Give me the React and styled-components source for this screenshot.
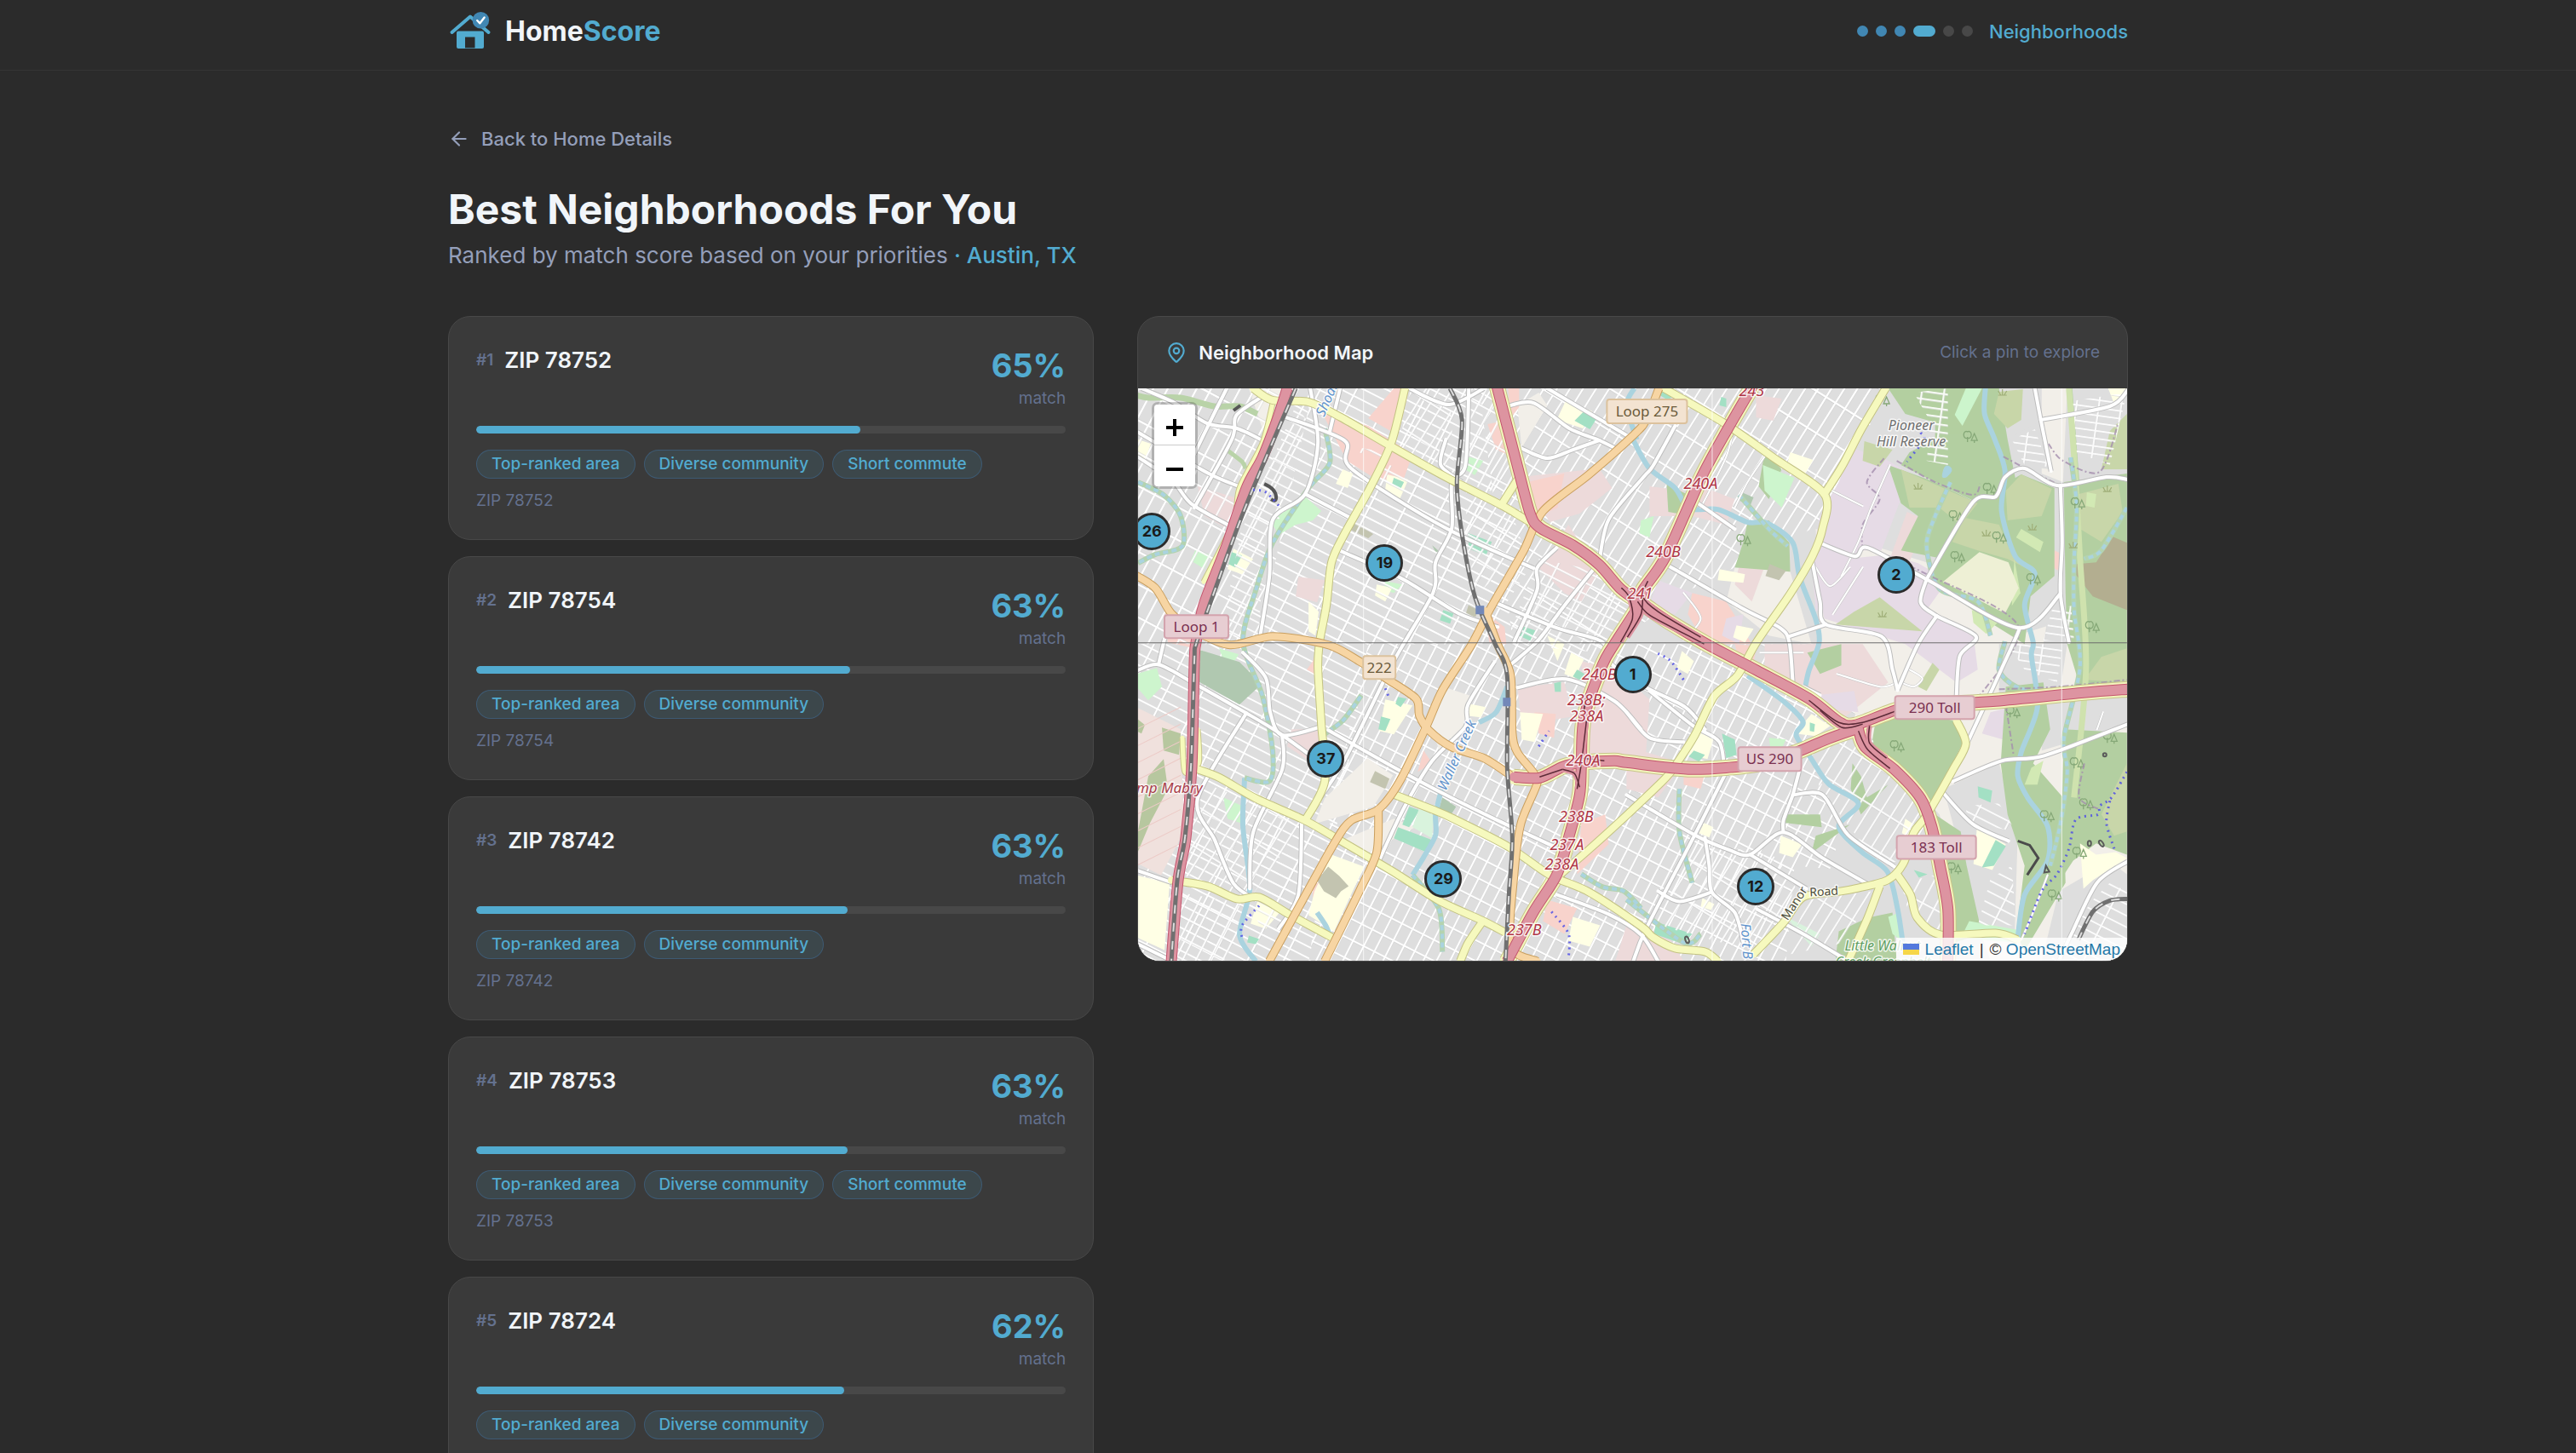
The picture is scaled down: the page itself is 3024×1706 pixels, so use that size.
import React from "react";
import styled, { createGlobalStyle, css } from "styled-components";
import { ArrowLeft, MapPin } from "lucide-react";

const color = {
  bg: "#2b2b2b",
  card: "#3a3a3a",
  line: "#484848",
  hairline: "#353535",
  primary: "#52abd0",
  primaryDeep: "#4187b3",
  text: "#f1f5f9",
  soft: "#949fba",
  muted: "#64718e",
};

const GlobalStyle = createGlobalStyle`
  *, *::before, *::after { box-sizing: border-box; }
  body {
    margin: 0;
    background: ${color.bg};
    color: ${color.text};
    font-family: Inter, "Liberation Sans", sans-serif;
    font-size: 22px;
    line-height: 32px;
    -webkit-font-smoothing: antialiased;
  }
  button { font: inherit; color: inherit; cursor: pointer; }
  a { color: inherit; text-decoration: none; }
`;

/* ---------- page frame ---------- */

const Page = styled.div`
  height: 100vh;
  overflow: hidden;
`;

const Container = styled.div`
  width: 100%;
  max-width: 2048px;
  margin: 0 auto;
  padding: 0 38px;
`;

const Header = styled.header`
  padding: 11px 0 20px;
  border-bottom: 1px solid ${color.hairline};
`;

const HeaderRow = styled(Container)`
  display: flex;
  align-items: center;
  justify-content: space-between;
`;

const Brand = styled.a`
  display: flex;
  align-items: center;
  gap: 16px;
  font-size: 32px;
  line-height: 45px;
  font-weight: 700;
`;

const BrandAccent = styled.span`
  color: ${color.primary};
`;

const Steps = styled.div`
  display: flex;
  align-items: center;
  gap: 19px;
  color: ${color.primary};
  font-weight: 500;
`;

const StepDots = styled.div`
  display: flex;
  gap: 9px;
`;

const stepColors = {
  done: color.primaryDeep,
  current: color.primary,
  todo: color.line,
};

const StepDot = styled.span`
  width: ${(p) => (p.$state === "current" ? 26 : 13)}px;
  height: 13px;
  border-radius: 7px;
  background: ${(p) => stepColors[p.$state]};
`;

const Main = styled.main`
  padding: 64px 0;
`;

const BackLink = styled.a`
  display: flex;
  width: fit-content;
  align-items: center;
  gap: 13px;
  color: ${color.soft};
  font-weight: 500;
`;

const Intro = styled.div`
  margin: 38px 0 51px;
`;

const Title = styled.h1`
  margin: 0 0 5px;
  font-size: 48px;
  line-height: 58px;
  font-weight: 700;
`;

const Subtitle = styled.p`
  margin: 0;
  font-size: 26px;
  line-height: 40px;
  color: ${color.soft};
`;

const City = styled.span`
  color: ${color.primary};
  font-weight: 500;
`;

const Columns = styled.div`
  display: grid;
  grid-template-columns: repeat(5, minmax(0, 1fr));
  gap: 51px;
  align-items: start;
`;

/* ---------- ranked list ---------- */

const RankList = styled.ol`
  grid-column: span 2;
  display: flex;
  flex-direction: column;
  gap: 19px;
  margin: 0;
  padding: 0;
  list-style: none;
`;

const surface = css`
  background: ${color.card};
  border: 1px solid ${color.line};
  border-radius: 26px;
`;

const Card = styled.li`
  ${surface}
  padding: 32px;
  font-size: 19px;
  line-height: 26px;
  color: ${color.muted};
`;

const CardTop = styled.div`
  display: flex;
  justify-content: space-between;
  align-items: flex-start;
  margin-bottom: 19px;
`;

const CardHeading = styled.div`
  display: flex;
  align-items: center;
  gap: 13px;
`;

const Rank = styled.span`
  font-weight: 600;
`;

const Name = styled.h2`
  margin: 0;
  font-size: 26px;
  line-height: 38px;
  font-weight: 600;
  color: ${color.text};
`;

const Score = styled.div`
  text-align: right;
`;

const ScoreValue = styled.div`
  font-size: 38px;
  line-height: 51px;
  font-weight: 700;
  color: ${color.primary};
`;

const Track = styled.div`
  height: 9px;
  margin-bottom: 19px;
  border-radius: 5px;
  background: ${color.line};
  overflow: hidden;
`;

const Fill = styled.div`
  height: 100%;
  border-radius: 5px;
  background: ${color.primary};
`;

const Tags = styled.ul`
  display: flex;
  flex-wrap: wrap;
  gap: 10px;
  margin: 0 0 13px;
  padding: 0;
  list-style: none;
`;

const Tag = styled.li`
  padding: 3px 17px;
  border: 1px solid rgba(62, 112, 165, 0.45);
  border-radius: 17px;
  background: rgba(82, 171, 208, 0.12);
  color: ${color.primary};
  font-weight: 500;
`;

/* ---------- map panel ---------- */

const MapCard = styled.section`
  ${surface}
  grid-column: span 3;
  overflow: hidden;
`;

const MapHeader = styled.div`
  display: flex;
  align-items: center;
  justify-content: space-between;
  padding: 26px 32px;
`;

const MapTitle = styled.h2`
  display: flex;
  align-items: center;
  gap: 13px;
  margin: 0;
  font-size: 22px;
  line-height: 32px;
  font-weight: 600;

  svg {
    color: ${color.primary};
  }
`;

const MapHint = styled.span`
  font-size: 19px;
  color: ${color.muted};
`;

const MapView = styled.div`
  position: relative;
  height: 672px;
  overflow: hidden;
  background: #dedede;
`;

const MapArt = styled.svg`
  display: block;
  width: 100%;
  height: 100%;
`;

const ZoomControl = styled.div`
  position: absolute;
  top: 16px;
  left: 16px;
  display: flex;
  flex-direction: column;
  border: 3px solid rgba(0, 0, 0, 0.2);
  border-radius: 7px;
  background-clip: padding-box;
`;

const ZoomButton = styled.button`
  display: grid;
  place-items: center;
  width: 48px;
  height: 48px;
  padding: 7px 0 0;
  border: 0;
  background: #fff;
  color: #000;

  &:first-child {
    border-bottom: 1px solid #ccc;
    border-radius: 4px 4px 0 0;
  }
  &:last-child {
    border-radius: 0 0 4px 4px;
  }
`;

const Pin = styled.button`
  position: absolute;
  display: grid;
  place-items: center;
  width: 44px;
  height: 44px;
  margin: -22px 0 0 -22px;
  padding: 0;
  border: 3px solid ${color.bg};
  border-radius: 50%;
  background: ${color.primary};
  color: #1a1a1a;
  font-size: 18px;
  line-height: 24px;
  font-weight: 700;
`;

const Attribution = styled.div`
  position: absolute;
  right: 0;
  bottom: 0;
  display: flex;
  align-items: center;
  gap: 7px;
  padding: 0 8px;
  background: rgba(255, 255, 255, 0.8);
  color: #333;
  font-family: "Liberation Sans", Arial, sans-serif;
  font-size: 19px;
  line-height: 27px;

  a {
    display: inline-flex;
    align-items: center;
    gap: 7px;
    color: #2478a8;
  }
`;

/* ---------- map drawing ---------- */

/* Smooth path through a flat list of x,y values. */
const curve = (flat) => {
  const p = [];
  for (let i = 0; i < flat.length; i += 2) p.push([flat[i], flat[i + 1]]);
  let d = `M${p[0][0]} ${p[0][1]}`;
  for (let i = 0; i < p.length - 1; i++) {
    const a = p[i - 1] || p[i];
    const b = p[i];
    const c = p[i + 1];
    const e = p[i + 2] || c;
    d += `C${b[0] + (c[0] - a[0]) / 7} ${b[1] + (c[1] - a[1]) / 7} ${c[0] - (e[0] - b[0]) / 7} ${c[1] - (e[1] - b[1]) / 7} ${c[0]} ${c[1]}`;
  }
  return d;
};

const Roads = ({ lines, width, fill, casing, edge = 2 }) => (
  <g fill="none" strokeLinejoin="round">
    {lines.map((l, i) => (
      <path key={`c${i}`} d={curve(l)} stroke={casing} strokeWidth={width + edge} />
    ))}
    {lines.map((l, i) => (
      <path key={`f${i}`} d={curve(l)} stroke={fill} strokeWidth={width} strokeLinecap="round" />
    ))}
  </g>
);

const Areas = ({ fill, shapes }) => (
  <g fill={fill}>
    {shapes.map((s, i) => (
      <polygon key={i} points={s} />
    ))}
  </g>
);

const land = [
  ["#f2efe9", [
    "795,165 880,190 960,215 1030,290 1160,250 1160,672 1000,672 940,500 850,400 800,300",
    "361,351 391,361 384,394 353,424 343,394",
    "269,434 299,454 276,491 207,511 219,481",
    "1060,0 1090,0 1085,110 1060,100",
    "700,210 765,215 790,300 740,290 690,250",
    "940,430 1010,420 1010,440 955,455",
    "130,0 185,0 170,40 150,60",
    "445,20 470,5 480,20 450,70",
    "300,505 325,515 270,545 240,530",
  ]],
  ["#dedede", [
    "1010,300 1090,300 1080,365 1010,365",
    "1090,0 1160,0 1150,50 1120,105 1092,80",
    "1020,60 1055,40 1070,95 1045,92 1022,110",
    "1060,370 1160,358 1160,395 1060,425",
    "945,470 1010,440 1032,520 1028,650 985,640 965,545",
    "800,400 860,410 925,500 935,560 890,570 830,520 790,440",
    "770,560 880,570 930,640 945,672 760,672",
    "1080,590 1140,555 1160,570 1160,672 1060,672",
    "1070,250 1095,245 1098,300 1062,300",
    "808,150 850,120 870,140 830,180",
  ]],
  ["#eddada", [
    "449,104 541,94 556,117 518,147 483,157",
    "188,221 219,225 210,251 185,244",
    "70,115 120,130 105,165 78,150",
    "661,115 700,130 690,160 650,150",
    "707,200 740,195 720,250 700,230",
    "735,300 850,300 880,345 830,385 780,355 735,335",
    "902,145 925,155 900,215 880,205",
    "520,320 560,330 600,365 595,440 525,430",
    "445,351 500,345 510,385 450,395",
    "573,420 640,440 610,480 573,470",
    "573,630 620,640 640,672 560,672",
    "600,115 640,120 630,150 600,150",
    "725,8 755,12 745,38 725,34",
    "505,160 540,215 520,250 500,240 470,210",
    "180,400 215,400 205,440 175,420",
  ]],
  ["#f8d3cc", [
    "215,27 270,44 322,77 310,111 275,104 245,85",
    "300,0 318,0 305,55 270,35",
    "434,0 447,0 447,22 437,35",
    "410,42 430,38 440,80 420,72",
    "457,110 500,100 492,140 470,150",
    "650,240 690,250 720,300 665,300 645,265",
    "700,300 725,302 722,325 705,320",
    "520,510 548,500 552,535 515,570",
    "480,600 515,610 500,640 475,625",
    "407,262 430,280 432,300 412,298",
    "30,262 70,275 66,305 35,298",
    "205,585 222,570 225,600 205,612",
    "205,320 213,296 216,340 198,330",
    "335,425 345,440 328,450",
    "1075,190 1085,195 1082,215 1073,210",
    "640,455 665,452 660,470 640,465",
    "465,380 490,382 488,410 470,405",
  ]],
  ["#e6dbe6", [
    "837,70 875,82 906,100 872,190 850,190 830,240 795,262 790,200 800,150 822,110",
    "791,204 880,195 915,205 950,225 925,260 980,290 985,330 960,345 900,300 805,270",
    "1000,380 1020,375 1025,415 990,405",
    "610,225 650,240 630,265 600,255",
    "690,270 710,265 705,300 685,290",
    "797,360 840,355 845,380 800,375",
    "920,145 960,170 950,190 922,175",
  ]],
  ["#b3cfa1", [
    "880,0 1010,0 1020,60 1030,110 980,132 935,110 895,90 905,75 935,60 935,40 900,30",
    "979,134 1036,101 1075,117 1075,220 1047,244 1040,300 1000,275 930,225 940,190",
    "880,90 935,110 985,135 945,200 895,190 915,150 895,135",
    "1086,110 1160,100 1160,350 1105,350 1090,300 1088,240",
    "715,157 740,155 764,181 765,215 700,210 710,180",
    "620,112 645,125 650,150 622,145",
    "735,75 755,95 740,130 728,115",
    "864,397 891,380 960,390 967,417 933,487 891,444 860,421",
    "1018,350 1062,345 1070,400 1050,440 1085,480 1088,580 1040,660 1030,640 1040,560 1020,500 1012,440",
    "1086,400 1160,404 1160,547 1124,534 1097,554 1082,577",
    "822,637 856,621 885,615 890,672 818,672",
    "935,500 965,520 972,560 990,640 958,650 950,560",
    "756,500 800,500 802,515 760,510",
    "838,440 848,455 855,480 880,465 848,500 836,470",
    "795,525 835,512 790,545",
    "785,310 825,300 825,325 800,335",
    "1090,0 1096,0 1105,120 1098,80",
  ]],
  ["#c8d6a9", [
    "1010,4 1038,1 1036,37 1020,47 1004,30",
    "895,95 940,115 985,135 965,160 940,140 905,140",
    "1036,101 1072,118 1060,150 1020,155 1018,120",
    "970,152 1010,160 1025,195 1050,215 1020,200 985,190 955,180",
    "1100,125 1150,112 1155,145 1130,180 1105,165",
    "840,262 870,245 920,285 818,277",
    "1130,315 1160,305 1160,345 1110,342",
    "1130,500 1160,440 1160,520 1145,525",
    "852,62 885,72 870,92 850,85",
    "925,355 940,330 932,322 915,350",
    "1140,50 1160,30 1160,95 1130,95",
  ]],
  ["#cdf5cd", [
    "971,0 990,0 967,44 958,31",
    "165,144 196,127 215,144 205,155 185,160 165,172 158,160",
    "733,90 770,105 755,140 735,120",
    "-2,335 22,328 28,350 12,366 -2,350",
    "67,190 85,195 78,212 62,202",
    "386,80 405,85 395,102 385,96",
    "290,226 310,230 300,240 288,236",
    "95,305 118,312 112,322 100,318",
    "100,480 122,490 120,510 105,505",
    "880,620 893,615 898,650 885,640",
    "975,625 1030,635 1030,650 965,645",
    "590,155 605,150 600,175 588,170",
    "740,410 760,412 752,430 742,424",
  ]],
  ["#d2e9b4", [
    "1036,165 1062,180 1058,192 1030,175",
    "1048,445 1062,437 1055,465 1040,465",
    "1113,122 1124,124 1122,140 1112,138",
    "978,260 1008,275 995,288 980,275",
    "1028,200 1035,240 1025,255",
  ]],
  ["#eef0d5", ["987,192 1021,204 1033,234 1017,264 944,227"]],
  ["#b0c8b0", [
    "73,307 119,321 145,347 119,371 71,344",
    "357,480 373,491 366,502 352,497",
    "708,122 722,128 718,138 706,132",
    "345,184 352,190 350,194",
  ]],
  ["#f0e1dd", ["-2,374 50,400 54,520 27,571 -2,557"]],
  ["#b7c79f", [
    "-2,387 8,395 4,405 -2,402",
    "28,398 50,405 48,430 30,425",
    "-2,530 12,455 30,435 35,470 14,510 -2,548",
  ]],
  ["#b3ae90", ["1143,174 1160,181 1160,260 1120,244 1099,217 1101,206 1124,204"]],
  ["#ffffe5", [
    "-2,571 37,581 31,659 -2,644",
    "227,547 265,561 230,637 200,618 207,590",
    "502,14 533,27 522,47 491,37",
    "292,101 317,107 307,130 290,118",
    "0,60 15,65 8,85 -2,80",
    "240,95 252,100 246,117 232,112",
    "112,188 135,200 122,218 105,212",
    "290,365 322,372 300,406 283,402",
    "448,380 475,382 465,415 450,412",
    "508,310 523,318 512,340 500,335",
    "388,370 408,374 402,386 385,384",
    "480,290 500,300 492,320",
    "682,212 712,218 710,228 680,225",
    "765,75 792,84 780,104 760,96",
    "638,308 652,320 645,335 632,328",
    "790,382 812,396 795,408 770,405",
    "652,400 675,412 668,435 645,430",
    "754,525 779,535 768,550 752,545",
    "900,505 915,515 910,530 896,522",
    "984,517 1018,535 1002,565 980,558",
    "1105,534 1124,547 1147,544 1160,551 1120,577 1109,587",
    "140,602 166,615 150,634 132,628",
    "510,620 542,630 530,655 505,648",
    "1138,0 1160,0 1145,18",
    "280,230 298,234 290,250 278,243",
    "702,278 722,282 712,298 698,292",
    "662,598 676,605 672,612 660,608",
    "200,250 212,262 208,290 200,285",
    "664,510 675,515 670,527 658,522",
  ]],
  ["#c3c4b0", [
    "223,561 236,572 247,584 238,590 232,598 218,590 210,577",
    "248,152 276,171 270,176 245,164",
    "388,253 400,256 396,268 384,266",
    "278,449 295,458 290,470 272,462",
    "741,206 760,214 752,225 736,220",
  ]],
  ["#a3e0c4", [
    "522,28 540,32 530,48 512,38",
    "300,105 312,110 308,118 298,112",
    "387,170 415,180 408,196 388,188",
    "110,192 122,196 114,210 106,206",
    "305,362 315,364 308,374 302,370",
    "285,385 296,388 290,402 282,400",
    "358,260 370,264 366,276 354,272",
    "448,278 466,284 460,296 446,290",
    "318,491 330,495 318,515 310,512",
    "305,515 345,530 340,545 300,528",
    "488,346 496,344 496,356 489,356",
    "985,467 1002,472 1000,486 986,480",
    "1006,530 1018,537 1004,560 990,562",
    "685,405 700,412 702,430 690,434",
    "608,626 650,640 640,652 605,640",
    "788,392 794,394 793,403 788,402",
    "515,330 524,335 518,342 510,338",
    "130,642 142,646 138,652 128,650",
    "652,425 665,430 658,438 646,432",
    "910,565 926,570 916,574",
    "613,2 628,8 622,14 612,8",
    "684,10 690,12 690,22 682,20",
  ]],
  ["#d9f3dd", ["330,492 347,501 345,528 322,515", "760,620 800,640 790,655"]],
];

/* Broad street texture under the land use: outline, pattern id */
const baseGrids = [
  ["-2,0 205,0 140,300 -2,300", "gridA"],
  ["205,0 400,0 440,300 140,300", "gridB"],
  ["400,0 880,0 800,160 640,240 560,300 440,300", "gridC"],
  ["-2,300 270,300 240,480 -2,480", "gridB"],
  ["270,300 800,300 860,400 780,672 200,672 230,480", "gridD"],
  ["-2,480 240,480 200,672 -2,672", "gridB"],
];

/* Neighbourhood street grids: outline, pattern id */
const grids = [
  ["-2,0 170,0 120,150 60,300 -2,300", "gridA"],
  ["185,20 215,60 195,120 150,170 140,300 95,300 120,170", "gridB"],
  ["235,65 440,150 460,210 400,300 225,300 235,190 290,75", "gridB"],
  ["320,0 365,0 372,110 305,70", "gridC"],
  ["385,0 420,0 445,130 380,110", "gridA"],
  ["385,120 455,155 440,200 400,240 385,190", "gridC"],
  ["470,200 545,215 585,255 545,310 430,300", "gridB"],
  ["745,40 760,0 875,0 820,110 790,75", "gridC"],
  ["70,460 195,510 130,600 50,570", "gridC"],
  ["200,515 235,535 160,672 130,600", "gridB"],
  ["40,590 130,605 120,640 100,672 35,672", "gridD"],
  ["395,395 432,390 432,450 380,430", "gridD"],
  ["443,540 485,575 460,620 440,640", "gridD"],
  ["655,530 750,550 780,600 720,660 610,630", "gridC"],
  ["785,420 860,410 920,500 930,545 870,560 800,470", "gridC"],
  ["785,600 860,590 830,650 760,665", "gridC"],
  ["895,580 940,570 950,640 905,620", "gridA"],
  ["1000,575 1025,560 1030,630 985,630", "gridB"],
  ["970,490 1010,487 1030,520 975,510", "gridB"],
  ["1095,15 1160,5 1140,90 1100,75", "gridE"],
  ["1025,60 1052,48 1068,92 1040,90", "gridE"],
  ["1072,260 1095,255 1098,296 1062,296", "gridE"],
  ["1120,600 1140,580 1160,590 1160,672 1070,672", "gridB"],
  ["910,5 950,0 950,90 925,85 930,40", "gridE"],
  ["1020,300 1085,300 1078,345 1040,330", "gridE"],
];

const creeks = [
  [581, 61, 600, 94, 630, 117, 646, 141, 680, 142, 715, 157, 738, 158, 768, 181, 776, 221, 795, 271, 799, 298, 787, 331, 782, 354],
  [994, 0, 993, 30, 1005, 60, 1017, 97, 1013, 144, 1029, 197, 1052, 217, 1040, 254, 1050, 298, 1048, 314, 1055, 374, 1036, 427, 1032, 455, 1044, 481, 1067, 514, 1067, 554, 1040, 594, 1032, 644],
  [715, 337, 757, 367, 780, 391, 772, 407, 790, 435, 810, 464, 845, 487, 822, 514, 849, 544, 879, 567, 891, 611, 898, 657],
  [433, 350, 420, 380, 400, 392],
  [356, 470, 349, 500, 349, 524, 335, 550, 322, 571],
  [125, 457, 123, 514, 131, 587, 119, 641, 138, 672],
  [210, 615, 220, 630, 225, 642],
  [582, 0, 573, 20, 585, 60],
];
const dashedCreeks = [
  [219, 47, 225, 87, 200, 117, 158, 181, 138, 237, 123, 298, 146, 361, 158, 427, 154, 461, 125, 457],
  [0, 110, 30, 125, 50, 150, 52, 185, 20, 195, 0, 205],
  [1094, 81, 1101, 137, 1098, 204, 1098, 260, 1105, 327, 1086, 411, 1090, 450, 1082, 511, 1070, 560],
  [953, 110, 935, 150, 925, 185, 940, 235, 985, 250, 1000, 290],
  [1160, 140, 1130, 190, 1110, 200],
  [322, 571, 353, 611, 357, 661],
  [573, 600, 640, 650, 660, 640],
  [635, 470, 635, 520, 650, 580],
  [520, 570, 545, 585, 570, 590, 590, 610],
  [215, 408, 240, 390, 262, 360],
  [1017, 297, 1010, 330, 1030, 350, 1070, 360],
  [705, 125, 740, 165, 762, 185],
];

const streets = [
  [4, 0, 43, 17, 81, 41, 116, 47, 146, 61],
  [-1, 51, 85, 101, 135, 121],
  [-1, 80, 40, 108, 62, 135, 105, 160],
  [104, 0, 84, 40, 66, 77],
  [165, 31, 242, 61, 250, 94, 361, 164, 464, 211],
  [145, 10, 115, 32, 110, 60, 66, 140],
  [202, 0, 211, 64, 196, 124, 158, 154, 154, 221, 142, 298],
  [196, 124, 253, 154],
  [238, 191, 311, 224, 376, 264, 422, 280],
  [318, 0, 364, 19, 406, 0],
  [237, 0, 225, 50],
  [361, 60, 355, 90, 380, 110],
  [433, 21, 464, 17, 506, 47, 541, 61, 567, 74],
  [449, 70, 480, 82, 510, 72, 541, 61],
  [541, 204, 552, 154, 593, 104, 604, 91, 630, 44],
  [541, 204, 500, 255, 468, 297, 430, 330],
  [491, 187, 468, 211, 468, 237, 441, 298],
  [418, 251, 491, 281, 544, 297, 556, 324, 596, 351, 642, 374, 665, 400],
  [388, 0, 384, 90, 368, 110, 368, 164, 349, 204, 346, 240, 300, 320, 240, 440, 192, 511],
  [480, 0, 573, 55],
  [-1, 331, 24, 324, 62, 344, 127, 381, 165, 404, 215, 440],
  [31, 294, 24, 324],
  [223, 401, 299, 444, 361, 477, 422, 507, 487, 537],
  [127, 381, 70, 481, 90, 530, 112, 581, 138, 600],
  [169, 407, 169, 447, 135, 521, 131, 587],
  [123, 310, 150, 340, 155, 380, 169, 407, 215, 397],
  [192, 511, 188, 594, 165, 634],
  [418, 321, 387, 371, 384, 397, 345, 437, 311, 494, 280, 560],
  [491, 594, 552, 617, 590, 641, 610, 672],
  [445, 351, 502, 341, 559, 367, 590, 400],
  [0, 566, 40, 580],
  [0, 652, 40, 672],
  [573, 380, 600, 410, 640, 415],
  [573, 477, 653, 524, 692, 541, 718, 547, 757, 521, 803, 551, 860, 584],
  [688, 454, 653, 524, 596, 634, 581, 672],
  [665, 527, 670, 560, 673, 591, 700, 615, 710, 650],
  [610, 590, 635, 602, 673, 591],
  [776, 447, 768, 477, 757, 507, 757, 521],
  [768, 477, 803, 477, 833, 524, 887, 561],
  [718, 547, 784, 587],
  [726, 611, 780, 640, 833, 672],
  [600, 355, 650, 395, 682, 415, 688, 454],
  [615, 204, 707, 257, 753, 281, 764, 298, 768, 344],
  [650, 130, 700, 165],
  [799, 181, 841, 197, 856, 187, 925, 224, 1033, 281, 1082, 241],
  [925, 224, 918, 251, 937, 267, 983, 291, 964, 314, 960, 361],
  [925, 224, 979, 134, 1006, 127, 1017, 104, 1040, 94, 1078, 114, 1136, 104, 1161, 107],
  [1052, 0, 1059, 37, 1071, 97],
  [1059, 37, 1140, 21, 1161, 2],
  [1082, 114, 1084, 180, 1082, 241, 1092, 298],
  [791, 204, 800, 250, 807, 277, 872, 291, 885, 330, 891, 354],
  [764, 291, 807, 277],
  [1033, 281, 1029, 294, 975, 411, 956, 447],
  [956, 461, 1013, 437, 1063, 431, 1161, 394],
  [937, 267, 915, 300, 891, 354],
  [944, 474, 979, 511, 1021, 531],
  [800, 360, 780, 350],
  [1161, 555, 1125, 580, 1095, 640, 1080, 672],
];

const lanes = [
  [1067, 571, 1050, 615, 1036, 647],
  [882, 90, 860, 140, 845, 180, 825, 220],
  [810, 118, 850, 138],
  [850, 210, 815, 265],
  [795, 210, 812, 232, 835, 210],
  [1125, 400, 1132, 380],
  [700, 40, 690, 80, 660, 140],
  [735, 80, 715, 110, 700, 140],
  [640, 240, 660, 270, 640, 295],
  [730, 310, 780, 310],
  [820, 335, 870, 350, 890, 345],
  [905, 330, 920, 340, 910, 350, 895, 345],
];

const secondary = [
  [135, 0, 158, 14, 200, 16, 238, 34, 295, 67, 361, 104, 426, 137, 460, 157],
  [313, 0, 297, 64, 272, 117, 242, 171, 227, 204, 221, 254, 213, 297, 211, 327, 215, 394, 219, 461, 196, 507],
  [617, 0, 688, 41, 745, 81, 805, 124, 803, 164, 791, 197, 765, 241, 726, 297, 703, 337, 676, 361, 653, 407, 634, 437, 619, 457, 573, 501, 529, 541, 491, 574],
  [877, 0, 849, 47, 826, 91, 805, 124],
  [70, 447, 96, 457, 138, 481, 196, 507, 238, 531, 299, 567, 353, 601, 403, 624, 430, 638],
  [299, 476, 345, 494, 368, 504, 433, 537, 483, 571, 529, 591, 590, 631, 604, 644, 630, 657, 665, 661, 680, 672],
  [39, 577, 81, 584, 116, 599, 142, 597, 177, 617, 227, 644],
  [403, 627, 387, 651, 378, 672],
  [722, 664, 757, 627, 780, 597, 818, 591, 841, 587, 879, 577, 898, 557, 910, 521, 925, 501, 956, 447, 971, 417, 960, 390],
  [891, 571, 906, 594, 914, 621, 941, 641, 1006, 639, 1032, 647],
  [870, 584, 856, 621, 833, 672],
  [445, 107, 426, 137],
];

const frontage = [
  [158, 17, 146, 64, 119, 117, 112, 157, 77, 227],
  [70, 400, 71, 440, 55, 450, 52, 410],
];

const primary = [
  [-7, 217, 20, 234, 39, 264, 66, 284, 108, 301, 158, 291, 223, 301, 261, 321, 292, 341, 326, 364, 330, 384, 341, 401, 368, 421, 406, 434, 437, 454],
  [611, 0, 596, 37, 582, 54, 529, 101, 475, 144, 452, 191, 414, 257, 391, 301, 357, 354, 338, 397, 307, 461, 282, 494, 250, 507, 230, 534, 184, 617, 154, 672],
  [282, 494, 280, 544, 261, 587, 219, 672],
  [407, 261, 422, 301, 437, 337, 439, 404, 445, 427, 464, 451, 468, 464, 449, 511, 441, 571, 437, 654, 468, 672],
];

const motorways = [
  [175, 0, 163, 37, 146, 81, 127, 117, 104, 184, 77, 254, 68, 298, 66, 321, 63, 444, 56, 527, 47, 577, 39, 672],
  [724, -8, 692, 47, 661, 104, 619, 197, 592, 237, 586, 257, 560, 298, 545, 324, 523, 387, 520, 441, 518, 477, 506, 524, 491, 571, 464, 614, 433, 672],
  [421, -2, 445, 91, 460, 147, 472, 164, 510, 184, 541, 207, 567, 236, 595, 255, 623, 274, 669, 301, 726, 331, 787, 364, 822, 391, 841, 395, 891, 377, 937, 371, 1006, 367, 1109, 357, 1162, 353],
  [841, 400, 810, 411, 772, 427, 726, 441, 650, 447, 573, 439, 559, 437, 521, 439, 498, 444, 471, 457, 441, 456],
  [845, 400, 853, 421, 887, 447, 918, 481, 931, 514, 941, 561, 950, 611, 950, 672],
];

const ramps = [
  [567, 234, 576, 245, 580, 270, 566, 298],
  [592, 240, 590, 265, 574, 292],
  [586, 250, 600, 266, 645, 290, 664, 300],
  [598, 226, 592, 244, 610, 262, 660, 292],
  [787, 366, 822, 392, 850, 392, 888, 379],
  [800, 378, 826, 398, 850, 394],
  [845, 402, 856, 424, 882, 446],
  [858, 396, 858, 416, 878, 434],
  [515, 470, 520, 440, 526, 390],
  [522, 434, 547, 437],
  [498, 447, 512, 452, 518, 468],
  [471, 456, 498, 447],
  [523, 378, 526, 360],
];

const rails = [
  [185, 0, 146, 91, 119, 157, 85, 251, 68, 300, 66, 320, 62, 444, 55, 527, 46, 577, 39, 672],
  [366, 0, 380, 37, 374, 111, 380, 171, 395, 244, 418, 298, 433, 337, 433, 444, 439, 527, 435, 594, 431, 672],
  [1103, 647, 1120, 614, 1140, 601, 1161, 599],
];

const paths = [
  [135, 119, 150, 122, 168, 141],
  [918, 52, 922, 60, 902, 86],
  [1160, 450, 1142, 480, 1128, 490, 1126, 500, 1100, 506, 1092, 540, 1078, 570, 1060, 590, 1040, 640],
  [1140, 484, 1136, 510, 1145, 540],
  [485, 614, 505, 640, 505, 668],
  [142, 607, 122, 630, 122, 645],
  [610, 311, 625, 320, 640, 342],
  [470, 420, 482, 402],
  [290, 352, 294, 362],
];

const boundaries = [
  [875, 82, 855, 110, 870, 130, 850, 160, 850, 190],
  [890, 85, 935, 110, 979, 125, 988, 112],
  [1015, 80, 1045, 96, 1078, 112],
  [1068, 65, 1085, 85, 1128, 98, 1150, 40],
  [850, 185, 925, 218, 1033, 280, 980, 370],
  [1110, 440, 1104, 480, 1128, 494],
  [1010, 353, 1080, 350, 1160, 342],
  [1018, 372, 1027, 430],
];

const trees = [
  [874, 14], [977, 57], [960, 150], [962, 198], [711, 178], [1000, 118], [1103, 135], [1051, 224],
  [1120, 280], [891, 420], [1027, 380], [1141, 410], [1102, 440], [1113, 488], [1067, 502], [1105, 545], [958, 563], [1076, 595], [1011, 175],
];
const grasses = [[1014, 5], [915, 115], [1137, 118], [995, 170], [873, 265], [1097, 184], [1049, 163]];

const exits = [
  ["243", 720, 9], ["240A", 660, 118], ["240B", 616, 198], ["241", 589, 247],
  ["240B", 541, 342], ["238B;", 526, 372], ["238A", 526, 391], ["240A", 522, 443],
  ["238B", 514, 509], ["237A", 503, 542], ["238A", 497, 565], ["237B", 453, 642],
];

const shields = [
  ["Loop 275", 550, 13, 94, 28, "tan"],
  ["Loop 1", 31, 266, 75, 27, "rose"],
  ["222", 264, 314, 38, 27, "tan"],
  ["290 Toll", 888, 361, 93, 27, "rose"],
  ["US 290", 704, 421, 74, 28, "rose"],
  ["183 Toll", 890, 525, 93, 27, "rose"],
];
const shieldTone = {
  tan: { fill: "#f3e3d1", stroke: "#dcc29d", text: "#6a5a3a" },
  rose: { fill: "#e7cdd2", stroke: "#d3a3ad", text: "#7a3050" },
};

const MapLabel = styled.text`
  font-family: "Noto Sans", "Open Sans", sans-serif;
  font-size: ${(p) => p.$size || 18}px;
  font-style: ${(p) => (p.$upright ? "normal" : "italic")};
  fill: ${(p) => p.$fill};
  stroke: ${(p) => (p.$halo ? "rgba(255, 255, 255, 0.8)" : "none")};
  stroke-width: 3px;
  stroke-linejoin: round;
  paint-order: stroke;
`;

const StreetGrid = ({ id, w, h, angle }) => (
  <pattern id={id} width={w} height={h} patternUnits="userSpaceOnUse" patternTransform={`rotate(${angle})`}>
    <path d={`M0 1H${w}M1 0V${h}`} fill="none" stroke="#cecece" strokeWidth="3" />
    <path d={`M0 1H${w}M1 0V${h}`} fill="none" stroke="#fff" strokeWidth="2" />
  </pattern>
);

const CityMap = () => (
  <MapArt viewBox="0 0 1160 672" preserveAspectRatio="xMinYMin slice" role="img" aria-label="Street map of Austin">
    <defs>
      <StreetGrid id="gridA" w={34} h={15} angle={-62} />
      <StreetGrid id="gridB" w={38} h={12} angle={27} />
      <StreetGrid id="gridC" w={13} h={42} angle={32} />
      <StreetGrid id="gridD" w={14} h={22} angle={27} />
      <StreetGrid id="gridE" w={26} h={9} angle={8} />
      <symbol id="tree" viewBox="0 0 16 16" overflow="visible">
        <path d="M4 14V8M4 9a3 4 0 1 1 0-7a3 4 0 1 1 0 7M12 15v-3M12 4l-3.500 8h7z" fill="none" stroke="#86a878" strokeWidth="1.300" />
      </symbol>
      <symbol id="grass" viewBox="0 0 12 8" overflow="visible">
        <path d="M1 7h10M6 7V0M4 7L1 2M8 7l3-5" fill="none" stroke="#9fae78" strokeWidth="1.200" />
      </symbol>
    </defs>

    <rect width="1160" height="672" fill="#dedede" />
    {baseGrids.map(([points, id], i) => (
      <polygon key={i} points={points} fill={`url(#${id})`} />
    ))}
    {land.map(([fill, shapes], i) => (
      <Areas key={i} fill={fill} shapes={shapes} />
    ))}
    <g opacity="0.9">
      {grids.map(([points, id], i) => (
        <polygon key={i} points={points} fill={`url(#${id})`} />
      ))}
    </g>
    {[...Array(9)].map((_, i) => (
      <path key={i} d={`M-2 ${400 + i * 20}L${50} ${374 + i * 20}`} stroke="#eccac6" strokeWidth="1" />
    ))}
    <path d={curve([-2, 8, 12, 11, 50, 11, 89, 21, 119, 21, 140, 30])} fill="none" stroke="#b9d3a8" strokeWidth="7" />
    <path d={curve([104, 72, 122, 86, 126, 94])} fill="none" stroke="#b9d3a8" strokeWidth="5" />
    <path d={curve([1092, 0, 1098, 80, 1105, 200, 1112, 330, 1098, 480])} fill="none" stroke="#cfe2ae" strokeWidth="7" />

    <g fill="none" stroke="#aad3df" strokeLinejoin="round">
      {creeks.map((l, i) => (
        <path key={i} d={curve(l)} strokeWidth="6" />
      ))}
      {dashedCreeks.map((l, i) => (
        <path key={i} d={curve(l)} stroke="#b4d3b0" strokeWidth="6" />
      ))}
      {dashedCreeks.map((l, i) => (
        <path key={`d${i}`} d={curve(l)} strokeWidth="4" strokeDasharray="6 4" />
      ))}
      <path d="M944 100q2-12 8-8t-4 12q-6 2-4-4z" fill="#aad3df" />
    </g>

    {trees.map(([x, y]) => (
      <use key={`${x}-${y}`} href="#tree" x={x - 8} y={y - 8} width="16" height="16" />
    ))}
    {grasses.map(([x, y]) => (
      <use key={`${x}-${y}`} href="#grass" x={x - 6} y={y - 4} width="12" height="8" />
    ))}
    <g fill="none" stroke="#a58fae" strokeWidth="2" strokeDasharray="7 3 2 3" opacity="0.8">
      {boundaries.map((l, i) => (
        <path key={i} d={curve(l)} />
      ))}
    </g>

    <Roads lines={lanes} width={2} fill="#ffffff" casing="#c4c4c4" edge={1} />
    <Roads lines={streets} width={4} fill="#ffffff" casing="#bdbdbd" />
    <Roads lines={frontage} width={5} fill="#f6fabb" casing="#c9c78c" />
    <Roads lines={motorways.slice(1)} width={17} fill="#f3f5bd" casing="#c8c68a" edge={2} />
    <Roads lines={secondary} width={8} fill="#f6f9be" casing="#c3c283" />
    <Roads lines={primary} width={8} fill="#f7d5a3" casing="#c99f5f" />
    <Roads lines={motorways} width={11} fill="#dd94a1" casing="#c4566f" />

    <g fill="none" stroke="#5d2b38" strokeWidth="2">
      {ramps.map((l, i) => (
        <path key={`r${i}`} d={curve(l)} stroke="#dd94a1" strokeWidth="6" />
      ))}
      {ramps.map((l, i) => (
        <path key={i} d={curve(l)} strokeWidth="1.500" />
      ))}
    </g>

    <g fill="none">
      {rails.map((l, i) => (
        <path key={i} d={curve(l)} stroke="#707070" strokeWidth="5" />
      ))}
      {rails.map((l, i) => (
        <path key={`d${i}`} d={curve(l)} stroke="#dcdcdc" strokeWidth="2" strokeDasharray="10 11" />
      ))}
      <path d="M148 112q14 6 14 16q0 6-6 2" stroke="#555" strokeWidth="4" />
      <path d="M1032 531l14 5l10 15l-13 20" stroke="#4b4b4b" strokeWidth="3" />
      <path d="M112 26l8-6" stroke="#555" strokeWidth="4" />
    </g>
    <g fill="none" stroke="#5050e6" strokeWidth="3" strokeDasharray="2 5" opacity="0.85">
      {paths.map((l, i) => (
        <path key={i} d={curve(l)} />
      ))}
    </g>
    <g fill="none" stroke="#5a5a5a" strokeWidth="2">
      <ellipse cx="1116" cy="534" rx="2" ry="3" />
      <ellipse cx="1130" cy="534" rx="2" ry="4" transform="rotate(-35 1130 534)" />
      <ellipse cx="1134" cy="430" rx="2" ry="2" />
      <ellipse cx="644" cy="647" rx="2" ry="4" transform="rotate(-20 644 647)" />
      <path d="M1063 568l2-8l4 7z" />
    </g>
    <rect x="396" y="255" width="10" height="10" fill="#7388b8" />
    <rect x="428" y="363" width="9" height="10" fill="#7388b8" />

    <g stroke="#ffffff" strokeWidth="1" opacity="0.75">
      <path d="M264.500 0V672M673.500 0V672M1083.500 0V672" />
    </g>
    <path d="M0 298.500H1160" stroke="#6d6d6d" strokeWidth="1" />

    {shields.map(([label, x, y, w, h, tone]) => (
      <g key={label}>
        <rect x={x} y={y} width={w} height={h} rx="3" fill={shieldTone[tone].fill} stroke={shieldTone[tone].stroke} strokeWidth="2" />
        <MapLabel $upright $size={17} $fill={shieldTone[tone].text} x={x + w / 2} y={y + 20} textAnchor="middle">
          {label}
        </MapLabel>
      </g>
    ))}
    {exits.map(([label, x, y]) => (
      <MapLabel key={`${label}-${y}`} $halo $fill="#b03646" x={x} y={y} textAnchor="middle">
        {label}
      </MapLabel>
    ))}
    <MapLabel $halo $fill="#a9404c" $size={17} x="-2" y="475">mp Mabry</MapLabel>
    <MapLabel $halo $fill="#707070" $size={16} x="907" y="49" textAnchor="middle">Pioneer</MapLabel>
    <MapLabel $halo $fill="#707070" $size={16} x="907" y="68" textAnchor="middle">Hill Reserve</MapLabel>
    <MapLabel $halo $fill="#5f93cc" $size={16} transform="translate(361 473) rotate(-66)">Waller Creek</MapLabel>
    <MapLabel $halo $fill="#5f93cc" $size={16} transform="translate(218 34) rotate(-66)">Shoal</MapLabel>
    <MapLabel $halo $fill="#5f93cc" $size={16} transform="translate(707 628) rotate(86)">Fort B</MapLabel>
    <MapLabel $halo $upright $fill="#4d4d3c" $size={14} transform="translate(762 625) rotate(-57)">Manor</MapLabel>
    <MapLabel $halo $upright $fill="#4d4d3c" $size={14} transform="translate(788 596) rotate(-3)">Road</MapLabel>
    <MapLabel $halo $fill="#5f9f62" $size={16} x="829" y="660">Little Walnut</MapLabel>
    <MapLabel $halo $fill="#5f9f62" $size={16} x="818" y="679">Creek Greenbelt</MapLabel>
  </MapArt>
);

/* ---------- icons ---------- */

const HomeScoreMark = () => (
  <svg width="51" height="51" viewBox="0 0 51 51" aria-hidden="true">
    <path d="M4.500 27L26 8.500L47.500 27" fill="none" stroke={color.primary} strokeWidth="4" strokeLinecap="round" strokeLinejoin="round" />
    <rect x="10" y="25.500" width="32" height="20.500" rx="2" fill={color.primary} />
    <rect x="20" y="32.500" width="11.500" height="12.800" fill={color.bg} />
    <circle cx="38.400" cy="12.700" r="9.800" fill={color.primaryDeep} />
    <path d="M34.200 13L37.400 16.300L42.600 9.500" fill="none" stroke="#fff" strokeWidth="2.400" strokeLinecap="round" strokeLinejoin="round" />
  </svg>
);

const ZoomGlyph = ({ plus }) => (
  <svg width="20" height="20" viewBox="0 0 20 20" aria-hidden="true">
    <path d={plus ? "M0 10H20M10 0V20" : "M0 10H20"} stroke="#000" strokeWidth="4" />
  </svg>
);

const Flag = () => (
  <svg width="19" height="13" viewBox="0 0 19 13" aria-hidden="true">
    <path d="M0 0H19V7H0Z" fill="#5379dd" />
    <path d="M0 7H19V13H0Z" fill="#f6d648" />
  </svg>
);

/* ---------- data ---------- */

const steps = ["done", "done", "done", "current", "todo", "todo"];

const neighborhoods = [
  { zip: "78752", score: 65.2, tags: ["Top-ranked area", "Diverse community", "Short commute"] },
  { zip: "78754", score: 63.4, tags: ["Top-ranked area", "Diverse community"] },
  { zip: "78742", score: 63, tags: ["Top-ranked area", "Diverse community"] },
  { zip: "78753", score: 63, tags: ["Top-ranked area", "Diverse community", "Short commute"] },
  { zip: "78724", score: 62.4, tags: ["Top-ranked area", "Diverse community"] },
];

const pins = [
  { rank: 26, x: 16, y: 168 },
  { rank: 19, x: 289, y: 205 },
  { rank: 2, x: 889, y: 219 },
  { rank: 1, x: 580, y: 336 },
  { rank: 37, x: 220, y: 435 },
  { rank: 29, x: 358, y: 576 },
  { rank: 12, x: 724, y: 585 },
];

const NeighborhoodCard = ({ rank, zip, score, tags }) => (
  <Card>
    <CardTop>
      <CardHeading>
        <Rank>#{rank}</Rank>
        <Name>ZIP {zip}</Name>
      </CardHeading>
      <Score>
        <ScoreValue>{Math.round(score)}%</ScoreValue>
        match
      </Score>
    </CardTop>
    <Track>
      <Fill style={{ width: `${score}%` }} />
    </Track>
    <Tags>
      {tags.map((t) => (
        <Tag key={t}>{t}</Tag>
      ))}
    </Tags>
    ZIP {zip}
  </Card>
);

export default function App() {
  return (
    <Page>
      <GlobalStyle />
      <Header>
        <HeaderRow>
          <Brand href="#home">
            <HomeScoreMark />
            <span>
              Home<BrandAccent>Score</BrandAccent>
            </span>
          </Brand>
          <Steps>
            <StepDots>
              {steps.map((s, i) => (
                <StepDot key={i} $state={s} />
              ))}
            </StepDots>
            Neighborhoods
          </Steps>
        </HeaderRow>
      </Header>

      <Main>
        <Container>
          <BackLink href="#home-details">
            <ArrowLeft size={26} aria-hidden="true" />
            Back to Home Details
          </BackLink>
          <Intro>
            <Title>Best Neighborhoods For You</Title>
            <Subtitle>
              Ranked by match score based on your priorities <City>· Austin, TX</City>
            </Subtitle>
          </Intro>

          <Columns>
            <RankList>
              {neighborhoods.map((n, i) => (
                <NeighborhoodCard key={n.zip} rank={i + 1} {...n} />
              ))}
            </RankList>

            <MapCard>
              <MapHeader>
                <MapTitle>
                  <MapPin size={26} aria-hidden="true" />
                  Neighborhood Map
                </MapTitle>
                <MapHint>Click a pin to explore</MapHint>
              </MapHeader>
              <MapView>
                <CityMap />
                {pins.map((p) => (
                  <Pin key={p.rank} type="button" style={{ left: `${(p.x / 1160) * 100}%`, top: p.y }}>
                    {p.rank}
                  </Pin>
                ))}
                <ZoomControl>
                  <ZoomButton type="button" aria-label="Zoom in">
                    <ZoomGlyph plus />
                  </ZoomButton>
                  <ZoomButton type="button" aria-label="Zoom out">
                    <ZoomGlyph />
                  </ZoomButton>
                </ZoomControl>
                <Attribution>
                  <a href="#leaflet">
                    <Flag />
                    Leaflet
                  </a>
                  <span>|</span>
                  <span>
                    © <a href="#openstreetmap">OpenStreetMap</a>
                  </span>
                </Attribution>
              </MapView>
            </MapCard>
          </Columns>
        </Container>
      </Main>
    </Page>
  );
}
